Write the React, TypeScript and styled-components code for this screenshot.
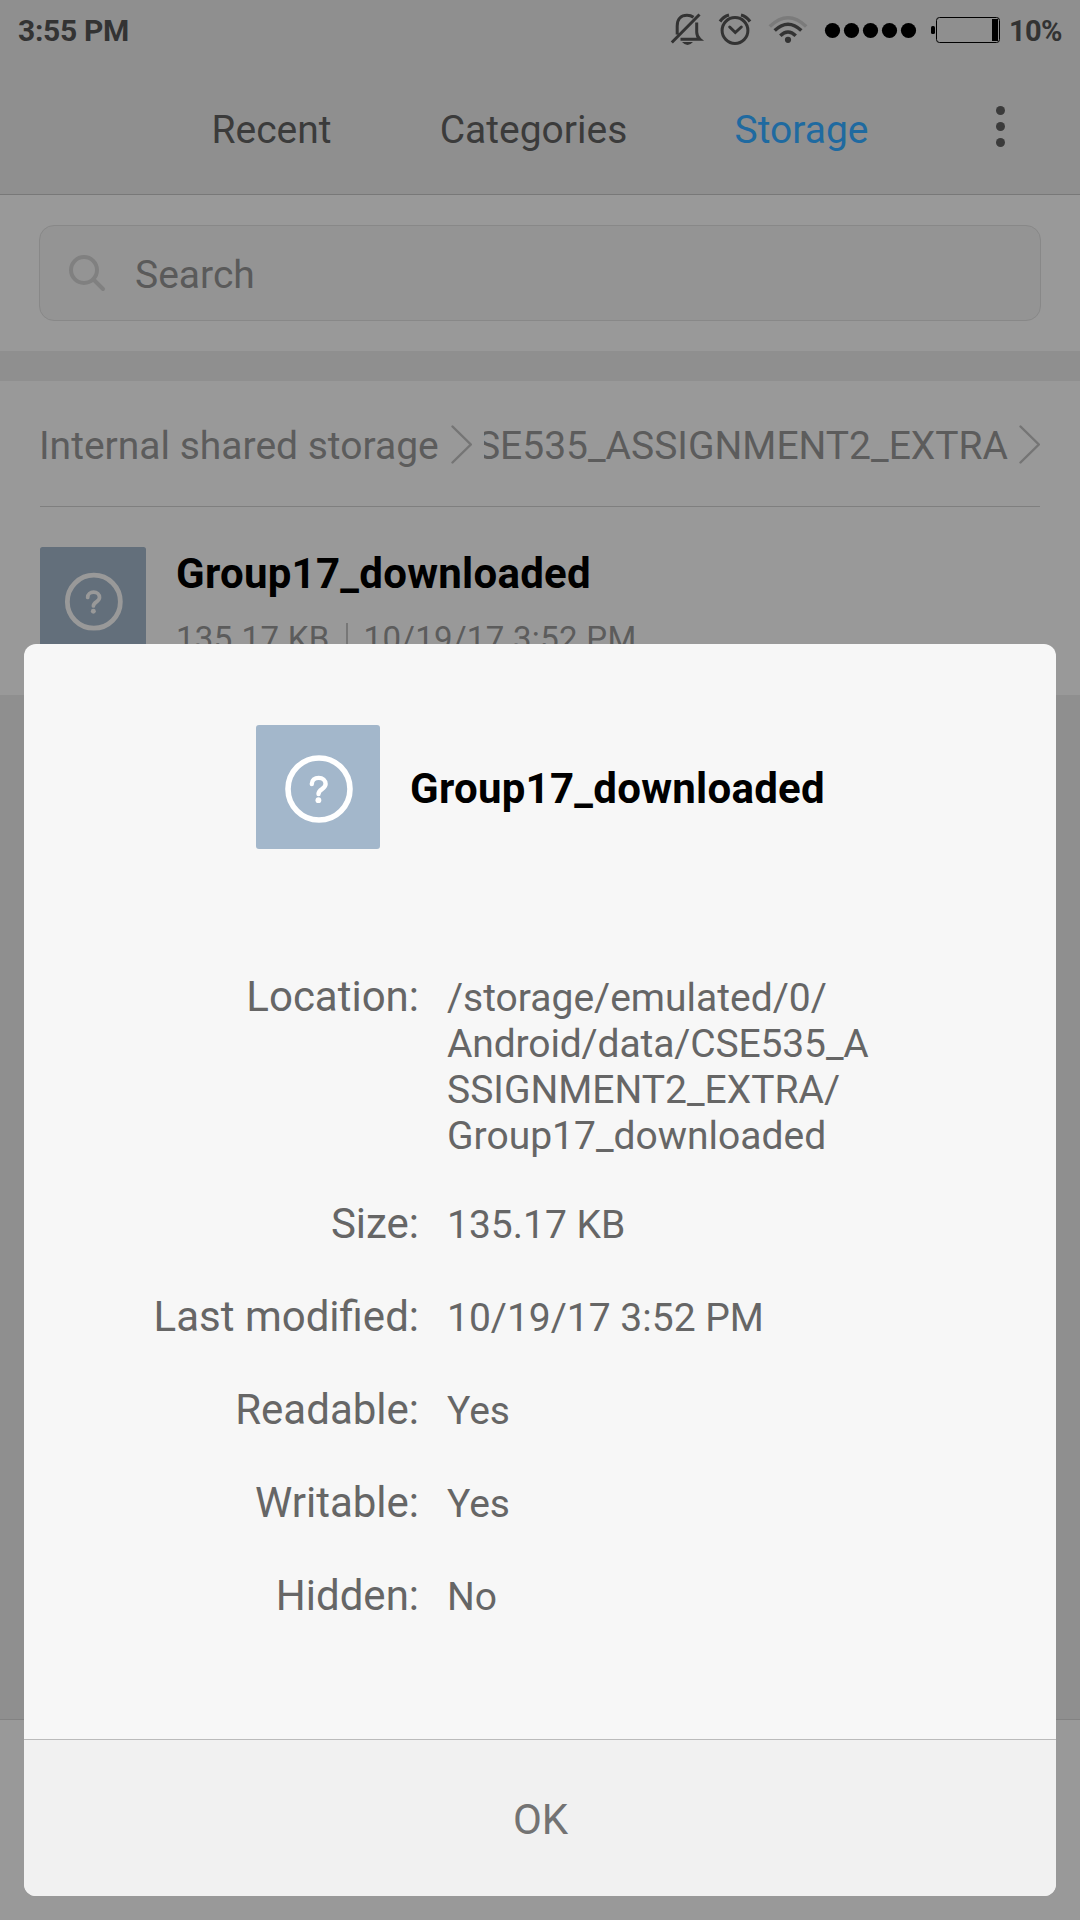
import React from "react";
import styled, { createGlobalStyle } from "styled-components";

const Global = createGlobalStyle`
  * { box-sizing: border-box; }
  html, body { margin: 0; padding: 0; }
  body { font-family: Roboto, "Noto Sans", sans-serif; background: #999; }
`;

const Screen = styled.div`
  position: relative;
  width: 1080px;
  height: 1920px;
  overflow: hidden;
  display: flex;
  flex-direction: column;
  background: #8f8f8f;
`;

const StatusBar = styled.div`
  height: 60px;
  flex: none;
  display: flex;
  align-items: center;
  padding: 0 18px;
  color: #333;
  font-weight: 700;
`;
const Clock = styled.span`
  flex: 1;
  font-size: 30px;
  line-height: 60px;
  letter-spacing: -0.3px;
  padding-top: 2px;
`;
const StatusIcons = styled.svg`
  display: block;
  flex: none;
`;
const Percent = styled.span`
  width: 60px;
  padding: 2px 0 0 7px;
  font-size: 29px;
  line-height: 60px;
  letter-spacing: -0.7px;
  white-space: nowrap;
`;

const TabBar = styled.nav`
  height: 135px;
  flex: none;
  display: flex;
  border-bottom: 1px solid #787878;
  padding-left: 159px;
`;
const Tab = styled.div<{ $active?: boolean; $width: number }>`
  width: ${(p) => p.$width}px;
  text-align: center;
  font-size: 39px;
  line-height: 140px;
  color: ${(p) => (p.$active ? "#1f6aa0" : "#3b3b3b")};
`;
const MoreButton = styled.div`
  flex: 1;
  display: flex;
  flex-direction: column;
  gap: 7px;
  padding: 46px 0 0 76px;
`;
const Dot = styled.i`
  width: 9px;
  height: 9px;
  border-radius: 50%;
  background: #3b3b3b;
`;

const SearchSection = styled.section`
  height: 156px;
  flex: none;
  padding: 30px 39px;
  background: #999;
`;
const SearchBox = styled.div`
  height: 96px;
  display: flex;
  align-items: center;
  border: 1px solid #888;
  border-radius: 15px;
  background: #949494;
  padding-left: 28px;
`;
const SearchText = styled.span`
  margin-left: 28px;
  padding-top: 3px;
  font-size: 39px;
  line-height: 92px;
  color: #5a5a5a;
`;

const Files = styled.section`
  margin-top: 30px;
  height: 314px;
  flex: none;
  padding: 0 40px 0 39px;
  background: #999;
`;
const Crumbs = styled.div`
  height: 126px;
  margin-left: 1px;
  display: flex;
  align-items: center;
  border-bottom: 1px solid #7f7f7f;
  font-size: 39px;
  color: #5c5c5c;
  white-space: nowrap;
`;
const Crumb = styled.span`
  width: 412px;
  margin-left: -1px;
  padding-top: 5px;
  line-height: 60px;
`;
const ClippedCrumb = styled.span`
  flex: 1;
  margin-left: 12px;
  padding: 5px 11px 0 0;
  overflow: hidden;
  display: flex;
  justify-content: flex-end;
  line-height: 60px;
`;
const FileRow = styled.div`
  display: flex;
  padding: 40px 0 0 1px;
`;
const FileText = styled.div`
  margin-left: 30px;
  display: flex;
  flex-direction: column;
`;
const FileName = styled.div<{ $top: number }>`
  padding-top: ${(p) => p.$top}px;
  font-size: 42px;
  font-weight: 700;
  line-height: 52px;
  letter-spacing: 0.27px;
  color: #000;
`;
const FileMeta = styled.div`
  display: flex;
  align-items: center;
  margin-top: 18px;
  font-size: 33px;
  line-height: 42px;
  letter-spacing: 0.3px;
  color: #5c5c5c;
`;
const MetaRule = styled.i`
  width: 2px;
  height: 33px;
  margin: 0 16px;
  background: #777;
`;

const BottomBar = styled.div`
  margin-top: auto;
  height: 201px;
  flex: none;
  border-top: 1px solid #828282;
  background: #999;
`;

const Dialog = styled.div`
  position: absolute;
  left: 24px;
  top: 644px;
  width: 1032px;
  height: 1252px;
  border-radius: 12px;
  overflow: hidden;
  display: flex;
  flex-direction: column;
  background: #f7f7f7;
`;
const DialogHead = styled.div`
  display: flex;
  align-items: center;
  gap: 30px;
  padding: 81px 0 0 232px;
`;
const Details = styled.dl`
  flex: 1;
  margin: 122px 0 0;
  display: grid;
  grid-template-columns: 395px 430px;
  column-gap: 28px;
  row-gap: 39px;
  align-content: start;
`;
const Label = styled.dt`
  height: 54px;
  padding-top: 1px;
  text-align: right;
  font-size: 42px;
  line-height: 50px;
  color: #666;
`;
const Value = styled.dd`
  margin: 0;
  padding-top: 4px;
  font-size: 39px;
  line-height: 46px;
  color: #666;
`;
const PathLine = styled.div<{ $tight: boolean }>`
  letter-spacing: ${(p) => (p.$tight ? "-0.13px" : "normal")};
`;
const OkButton = styled.button`
  height: 157px;
  flex: none;
  border: 0;
  border-top: 1px solid #bbb;
  padding: 4px 0 0 1px;
  background: #f1f1f1;
  color: #737373;
  font: 42px/50px Roboto, "Noto Sans", sans-serif;
`;
const IconSvg = styled.svg`
  display: block;
  flex: none;
`;

const UnknownFileIcon = ({ size, dim }: { size: number; dim?: boolean }) => (
  <IconSvg width={size} height={size} viewBox="0 0 124 124">
    <rect width="124" height="124" rx="3" fill={dim ? "#636f7b" : "#a3b7cb"} />
    <g fill="none" stroke={dim ? "#999" : "#fff"}>
      <circle cx="63" cy="64" r="31" strokeWidth="5.600" />
      <path
        d="M55.800 59C55.800 55.200 58.800 52.900 62.700 52.900S69.600 55.500 69.600 59.100C69.600 64.300 62.500 64 62.500 69"
        strokeWidth="4.400"
        strokeLinecap="round"
      />
    </g>
    <circle cx="62.400" cy="75.200" r="2.900" fill={dim ? "#999" : "#fff"} />
  </IconSvg>
);

const Chevron = () => (
  <IconSvg width="21" height="40" viewBox="0 0 21 40" fill="none" stroke="#757575" strokeWidth="2.400" strokeLinecap="round">
    <path d="M1.500 2.500L19.800 20.500L1.500 38.500" />
  </IconSvg>
);

const details: [string, string[]][] = [
  ["Location:", ["/storage/emulated/0/", "Android/data/CSE535_A", "SSIGNMENT2_EXTRA/", "Group17_downloaded"]],
  ["Size:", ["135.17 KB"]],
  ["Last modified:", ["10/19/17 3:52 PM"]],
  ["Readable:", ["Yes"]],
  ["Writable:", ["Yes"]],
  ["Hidden:", ["No"]],
];

export default function App() {
  return (
    <Screen>
      <Global />
      <StatusBar>
        <Clock>3:55 PM</Clock>
        <StatusIcons width="332" height="60" viewBox="670 0 332 60" fill="none" stroke="#333" strokeWidth="3">
          <path d="M671.800 42.500L699.500 14.500M677.200 34.500V26C677.200 19 681 15.300 687 15.300Q690.800 15.300 693.500 17.300M696.700 22.500V32Q696.700 36.500 700 39.300H680.500" />
          <path d="M682 42H693Q687.500 48 682 42Z" fill="#333" stroke="none" />
          <circle cx="735" cy="30.500" r="12.900" />
          <path d="M729.700 27L735.300 32.500L741.300 27" strokeLinecap="round" />
          <path d="M720 21.500Q723.500 16.500 729 15M741 15Q746.500 16.500 750 21.500" strokeWidth="3.200" />
          <path d="M769.800 26.500Q788 9 806.200 26.500" stroke="#7b7b7b" strokeWidth="3.500" />
          <path d="M774.700 30.500Q788 18 801.300 30.500M780.300 35.800Q788 28 795.700 35.800" strokeWidth="3.500" />
          <circle cx="788" cy="39.800" r="3.100" fill="#333" stroke="none" />
          <g fill="#000" stroke="none">
            {[832.5, 851.5, 870.5, 889.5, 908.5].map((x) => <circle key={x} cx={x} cy="30.500" r="7.600" />)}
            <rect x="931" y="26" width="4" height="8" rx="1.500" />
            <rect x="992" y="19" width="6" height="22" />
          </g>
          <rect x="936.500" y="17.500" width="63" height="25" rx="3" stroke="#000" strokeWidth="1" />
        </StatusIcons>
        <Percent>10%</Percent>
      </StatusBar>
      <TabBar>
        <Tab $width={225}>Recent</Tab>
        <Tab $width={299}>Categories</Tab>
        <Tab $width={237} $active>Storage</Tab>
        <MoreButton><Dot /><Dot /><Dot /></MoreButton>
      </TabBar>
      <SearchSection>
        <SearchBox>
          <IconSvg width="39" height="39" viewBox="0 0 39 39" fill="none" stroke="#808080" strokeWidth="4" strokeLinecap="round">
            <circle cx="16" cy="16" r="13" />
            <path d="M25.500 25.500L35 35" />
          </IconSvg>
          <SearchText>Search</SearchText>
        </SearchBox>
      </SearchSection>
      <Files>
        <Crumbs>
          <Crumb>Internal shared storage</Crumb>
          <Chevron />
          <ClippedCrumb>CSE535_ASSIGNMENT2_EXTRA</ClippedCrumb>
          <Chevron />
        </Crumbs>
        <FileRow>
          <UnknownFileIcon size={106} dim />
          <FileText>
            <FileName $top={1}>Group17_downloaded</FileName>
            <FileMeta>135.17 KB<MetaRule />10/19/17 3:52 PM</FileMeta>
          </FileText>
        </FileRow>
      </Files>
      <BottomBar />
      <Dialog role="dialog">
        <DialogHead>
          <UnknownFileIcon size={124} />
          <FileName $top={4}>Group17_downloaded</FileName>
        </DialogHead>
        <Details>
          {details.map(([label, lines]) => (
            <React.Fragment key={label}>
              <Label>{label}</Label>
              <Value>
                {lines.map((line) => (
                  <PathLine key={line} $tight={line.startsWith("Android")}>{line}</PathLine>
                ))}
              </Value>
            </React.Fragment>
          ))}
        </Details>
        <OkButton>OK</OkButton>
      </Dialog>
    </Screen>
  );
}
